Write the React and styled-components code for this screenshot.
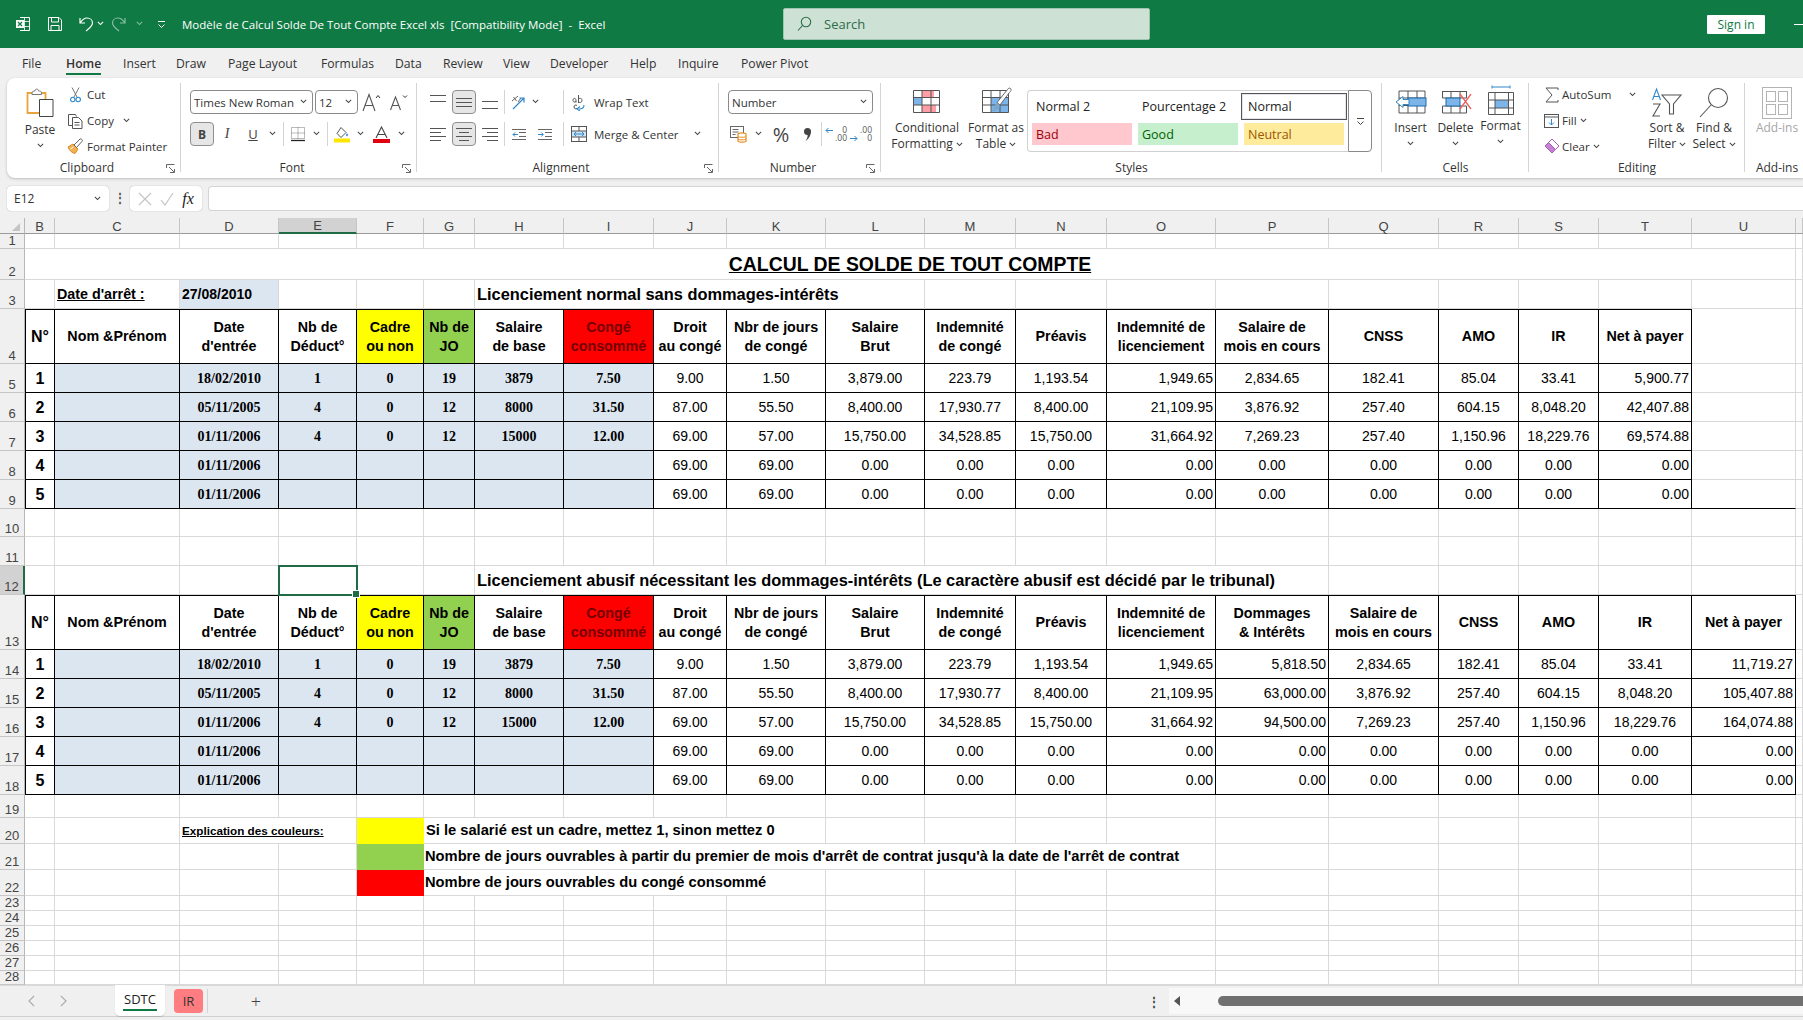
import React from 'react';
import styled, { createGlobalStyle } from 'styled-components';

const GlobalStyle = createGlobalStyle`
  html, body { margin: 0; padding: 0; background: #f0f0f0; }
  body { font-family: "Open Sans", "Liberation Sans", sans-serif; font-size: 12px; color: #222; }
  * { box-sizing: border-box; }
  svg { display: block; flex: none; }
`;

const Page = styled.div`
  width: 1803px;
  height: 1020px;
  overflow: hidden;
  display: flex;
  flex-direction: column;
  background: #f0f0f0;
`;

/* ---------- small drawings ---------- */

const Chevron = ({ color = '#444', size = 7 }) => (
  <svg width={size} height={size * 0.72} viewBox="0 0 8 5.5">
    <path d="M1 1l3 3 3-3" fill="none" stroke={color} strokeWidth="1.2" />
  </svg>
);

const Lines = ({ rows, color = '#555', w = 16, h = 14 }) => (
  <svg width={w} height={h} viewBox={`0 0 ${w} ${h}`}>
    {rows.map(([a, b, y], i) => (
      <path key={i} d={`M${a} ${y + 0.5}H${b}`} stroke={color} strokeWidth="1" />
    ))}
  </svg>
);

const ExcelLogo = () => (
  <svg width="16" height="16" viewBox="0 0 16 16">
    <path d="M5 1.5h9.5v13H5" fill="none" stroke="#fff" />
    <path d="M9.5 1.5v13M5 5.5h9.5M5 10.5h9.5" stroke="#fff" strokeWidth="0.8" />
    <rect x="1" y="4" width="8" height="8" fill="#fff" />
    <path d="M3 6l4 4M7 6l-4 4" stroke="#107c41" strokeWidth="1.3" />
  </svg>
);

const SaveIcon = () => (
  <svg width="16" height="16" viewBox="0 0 16 16" fill="none" stroke="#fff">
    <path d="M1.5 1.5h10.5l2.5 2.5v10.5h-13z" />
    <path d="M4.5 1.5v4.5h7v-4.5M4 14.5v-5h8v5" />
  </svg>
);

const UndoIcon = () => (
  <svg width="17" height="16" viewBox="0 0 17 16" fill="none" stroke="#fff" strokeWidth="1.2">
    <path d="M2 2v5h5M2 7c2-3 4-5 7-5 3.5 0 5.5 2.5 5.5 5 0 3-3 5-6.5 8" />
  </svg>
);

const RedoIcon = () => (
  <svg width="17" height="16" viewBox="0 0 17 16" fill="none" stroke="#fff" strokeWidth="1.2">
    <path d="M15 2v5h-5M15 7c-2-3-4-5-7-5C4.5 2 2.5 4.5 2.5 7c0 3 3 5 6.5 8" />
  </svg>
);

const CustomizeIcon = ({ color = '#fff' }) => (
  <svg width="9" height="9" viewBox="0 0 9 9" fill="none" stroke={color}>
    <path d="M1 1.5h7" />
    <path d="M1.5 4.5L4.5 7.5L7.5 4.5" />
  </svg>
);

const SearchIcon = () => (
  <svg width="15" height="16" viewBox="0 0 15 16" fill="none" stroke="#2d6b4a" strokeWidth="1.1">
    <circle cx="9" cy="6" r="4.7" />
    <path d="M5.5 9.5L1 14.5" />
  </svg>
);

const PasteIcon = () => (
  <svg width="28" height="31" viewBox="0 0 28 31">
    <path d="M1.5 6h18v20h-18z" fill="#fff" stroke="#e8a33d" strokeWidth="1.8" />
    <path d="M6 6c0-2 2-2 3-2 0-2.5 3.5-2.5 3.5 0 1 0 3 0 3 2v1.5H6z" fill="#fff" stroke="#777" />
    <path d="M13.5 12.5h13.5v17H13.5z" fill="#fff" stroke="#444" />
  </svg>
);

const CutIcon = () => (
  <svg width="11" height="16" viewBox="0 0 11 16" fill="none">
    <path d="M2 .5L7 10M9 .5L4 10" stroke="#777" />
    <circle cx="2.8" cy="12.5" r="2.2" stroke="#2f88cc" strokeWidth="1.1" />
    <circle cx="8.2" cy="12.5" r="2.2" stroke="#2f88cc" strokeWidth="1.1" />
  </svg>
);

const CopyIcon = () => (
  <svg width="17" height="16" viewBox="0 0 17 16" fill="none" stroke="#555">
    <path d="M5.5 12.5h-4v-11h7l1 2" />
    <path d="M5.5 4.5h6l3.5 3.5v7.5H5.5z" fill="#fff" />
    <path d="M7.5 9.5h5M7.5 12h5" />
  </svg>
);

const PainterIcon = () => (
  <svg width="17" height="16" viewBox="0 0 17 16">
    <path d="M1 9l5-3 5 5-3 4.5C5 15 2.5 12.5 1 9z" fill="#f2b14e" stroke="#d98a22" />
    <path d="M7 7l6-6c1-.8 3 1 2.2 2.2L9.5 9.5z" fill="#fff" stroke="#666" />
    <path d="M3.5 11l3-2" stroke="#fff" />
  </svg>
);

const Launcher = () => (
  <svg width="9" height="9" viewBox="0 0 9 9" fill="none" stroke="#666">
    <path d="M.5 4V.5H8.5M8.5 8.5H4M3 3l5 5M8.5 5v3.5" />
  </svg>
);

const GrowFont = ({ down }) => (
  <svg width="20" height="19" viewBox="0 0 20 19" fill="none" stroke="#555">
    <path d={down ? 'M1.5 17L6.5 4l5 13M3.5 12.5h6' : 'M1 18L7 1.5 13 18M3.5 12.5h7'} strokeWidth="1.1" />
    <path d={down ? 'M14 2.5l2 2 2-2' : 'M14 5l2-2.5L18 5'} stroke="#333" />
  </svg>
);

const BorderIcon = () => (
  <svg width="16" height="16" viewBox="0 0 16 16" fill="none" stroke="#777" strokeDasharray="1 1">
    <rect x="1.5" y="1.5" width="13" height="11" />
    <path d="M8 1.5v11M1.5 7h13" />
    <path d="M1 14.5h14" stroke="#222" strokeDasharray="none" strokeWidth="1.3" />
  </svg>
);

const FillIcon = () => (
  <svg width="16" height="17" viewBox="0 0 16 17">
    <path d="M7 1.5l5 5-5 5-4-4z" fill="none" stroke="#555" />
    <path d="M13 7c1 1.5 1.5 2.5 0 3.5-1.5-1-1-2 0-3.5z" fill="#3b86d8" />
    <rect y="12.5" width="16" height="4" fill="#ffe600" />
  </svg>
);

const FontColorIcon = () => (
  <svg width="17" height="17" viewBox="0 0 17 17">
    <path d="M3 12L8.5 1l5.5 11M5 8.5h7" fill="none" stroke="#444" strokeWidth="1.1" />
    <rect y="13" width="17" height="4" fill="#e0000f" />
  </svg>
);

const OrientIcon = () => (
  <svg width="17" height="17" viewBox="0 0 17 17" fill="none">
    <path d="M2 7l6-5M3.5 3l3 4M8 8L11 4" stroke="#666" />
    <path d="M3 15L14 4M9.5 4H14v4.5" stroke="#2f88cc" strokeWidth="1.2" />
  </svg>
);

const IndentIcon = ({ inc }) => (
  <svg width="14" height="13" viewBox="0 0 14 13" fill="none">
    <path d="M0 1.5h14M7 4.5h7M7 8.5h7M0 11.5h14" stroke="#666" />
    <path d={inc ? 'M0 6.5h5M3.3 4.5l2 2-2 2' : 'M1 6.5h5M3 4.5l-2 2 2 2'} stroke="#2f88cc" />
  </svg>
);

const WrapIcon = () => (
  <svg width="14" height="17" viewBox="0 0 14 17" fill="none">
    <path d="M1 6.5c0-3 3-3 3 0v2M1 6.5c0 2 3 2 3 .5M6.5 1v8M6.5 5c2-1.5 3.5-.5 3.5 1.5S8 9 6.5 8" stroke="#555" />
    <path d="M12 11c0 3-2 4-5 4M8 12.5L5 15l3 2" stroke="#2f88cc" strokeWidth="1.1" />
    <path d="M5 11.5c-1.5-1-3-.5-3 1.5s2 2 3 1.5" stroke="#555" />
  </svg>
);

const MergeIcon = () => (
  <svg width="16" height="16" viewBox="0 0 16 16" fill="none">
    <rect x=".5" y=".5" width="15" height="15" stroke="#555" />
    <rect x="1" y="5" width="14" height="6" fill="#cfe4f7" />
    <path d="M.5 5h15M.5 11h15M8 .5V5M8 11v4.5" stroke="#555" />
    <path d="M3 8h10M5 6l-2 2 2 2M11 6l2 2-2 2" stroke="#2f88cc" />
  </svg>
);

const AccountingIcon = () => (
  <svg width="18" height="18" viewBox="0 0 18 18" fill="none">
    <rect x=".5" y="1.5" width="13" height="11" stroke="#666" />
    <path d="M2.5 4.5h6M2.5 7h6M2.5 9.5h3" stroke="#666" />
    <path d="M8 9c0-1.5 8-1.5 8 0v7c0 1.5-8 1.5-8 0z" fill="#fff" stroke="#e58a1f" strokeWidth="1.2" />
    <path d="M8 11.5c0 1 8 1 8 0M8 14c0 1 8 1 8 0" stroke="#e58a1f" />
  </svg>
);

const CommaIcon = () => (
  <svg width="9" height="15" viewBox="0 0 9 15">
    <circle cx="4.5" cy="4.5" r="3.5" fill="#444" />
    <path d="M7.5 5c.5 4-2 7-5 9 1.5-2.5 2.5-4 2-7z" fill="#444" />
  </svg>
);

const DecimalText = styled.span`
  font-size: 8.5px;
  line-height: 8px;
  color: #555;
  white-space: nowrap;
`;

const DecimalBox = styled.div`
  width: 22px;
  display: grid;
  grid-template-columns: 8px 14px;
  grid-template-rows: 8px 8px;
  align-items: center;
  justify-items: end;
`;

const DecimalIcon = ({ inc }) => (
  <DecimalBox>
    {inc ? (
      <svg width="8" height="7" viewBox="0 0 8 7" fill="none">
        <path d="M8 3.5H1M3.5 1L1 3.500l2.500 2.500" stroke="#2f88cc" />
      </svg>
    ) : <span />}
    <DecimalText>{inc ? '0' : '.00'}</DecimalText>
    {inc ? <span /> : (
      <svg width="8" height="7" viewBox="0 0 8 7" fill="none">
        <path d="M0 3.500h7M4.500 1L7 3.500 4.500 6" stroke="#2f88cc" />
      </svg>
    )}
    <DecimalText>{inc ? '.00' : '0'}</DecimalText>
  </DecimalBox>
);

const GridSketch = ({ children }) => (
  <svg width="32" height="32" viewBox="0 0 32 32" fill="none">
    {children}
  </svg>
);

const tableLines = (
  <path d="M2.5 3.5h26v22h-26zM2.5 10.5h26M2.5 18h26M11 3.5v22M20 3.5v22" stroke="#555" />
);

const ConditionalIcon = () => (
  <GridSketch>
    <rect x="11" y="4" width="12" height="7" fill="#ff9ea5" />
    <rect x="3" y="11" width="8" height="7" fill="#7db5ea" />
    <rect x="11" y="18" width="14" height="7" fill="#ff9ea5" />
    {tableLines}
  </GridSketch>
);

const FormatTableIcon = () => (
  <GridSketch>
    <rect x="11" y="11" width="18" height="14" fill="#7db5ea" />
    {tableLines}
    <path d="M30.5 1.5c1.5 1.5 0 3-1.5 4.5l-9 12-3-2.5 10.5-13c1-1.5 2-1.8 3-1z" fill="#fff" stroke="#666" />
    <path d="M16.5 17c2-1 4 1 3 3-1 3-5 4.5-8.5 4 2-.8 3-2 3-4 0-1.500 1-2.500 2.500-3z" fill="#7aa7cc" />
  </GridSketch>
);

const InsertCellsIcon = () => (
  <GridSketch>
    <path d="M4 4h26v22H4zM4 11h26M4 18.5h26M13 4v22M22 4v22" stroke="#555" />
    <rect x="13" y="11" width="18" height="8" fill="#7db5ea" stroke="#1f6aa8" />
    <path d="M1 15l7-5.5v3h6v5H8v3z" fill="#fff" stroke="#2f88cc" />
  </GridSketch>
);

const DeleteCellsIcon = () => (
  <GridSketch>
    <path d="M2.5 4.5h24M2.5 26h24M2.5 11h24M2.5 19h24M11 4.5V11M20 4.5V11M11 19v7M20 19v7M2.5 4v7M2.5 19v7M26.5 4v7M26.5 19v7" stroke="#555" />
    <rect x="6" y="11" width="14" height="8" fill="#7db5ea" stroke="#1f6aa8" />
    <path d="M20 7l11 15M31 7L20 22" stroke="#f0625f" strokeWidth="1.3" />
  </GridSketch>
);

const FormatCellsIcon = () => (
  <svg width="30" height="33" viewBox="0 0 30 33" fill="none">
    <path d="M6 2h18M6 .5v3M24 .5v3" stroke="#2f88cc" />
    <rect x="9" y="15" width="14" height="8" fill="#7db5ea" />
    <path d="M2.5 7.5h25v22h-25zM2.5 15h25M2.5 23h25M9 7.5v22M22.5 7.5v22" stroke="#555" />
  </svg>
);

const SigmaIcon = () => (
  <svg width="14" height="16" viewBox="0 0 14 16" fill="none" stroke="#555">
    <path d="M13 3V1H1l6 7-6 7h12v-2" />
  </svg>
);

const FillDownIcon = () => (
  <svg width="15" height="14" viewBox="0 0 15 14" fill="none">
    <rect x=".5" y=".5" width="14" height="13" stroke="#555" />
    <path d="M.5 3h14" stroke="#555" />
    <path d="M7.5 5v6M5 8.5l2.5 2.5L10 8.5" stroke="#2f88cc" />
  </svg>
);

const EraserIcon = () => (
  <svg width="16" height="16" viewBox="0 0 16 16">
    <path d="M1 8l7-7 7 7-7 7z" fill="#fff" stroke="#a65fb7" />
    <path d="M1 8l3.5-3.5 7 7L8 15z" fill="#c77fd6" stroke="#a65fb7" />
  </svg>
);

const SortFilterIcon = () => (
  <svg width="32" height="32" viewBox="0 0 32 32" fill="none">
    <path d="M1.5 13L5.5 2l4 11M3 9.5h5" stroke="#2f88cc" strokeWidth="1.1" />
    <path d="M2 17h7l-7 12h7" stroke="#555" strokeWidth="1.1" />
    <path d="M11 8h19l-7.5 9v10h-4V17z" stroke="#555" strokeWidth="1.1" />
  </svg>
);

const FindIcon = () => (
  <svg width="32" height="32" viewBox="0 0 32 32" fill="none" stroke="#555" strokeWidth="1.1">
    <circle cx="20" cy="11" r="9.5" />
    <path d="M13 18L2 30" />
  </svg>
);

const AddInsIcon = () => (
  <svg width="30" height="32" viewBox="0 0 30 32" fill="none" stroke="#b4b4b4">
    <rect x=".5" y=".5" width="29" height="31" />
    <rect x="4.5" y="4.5" width="9" height="10" />
    <rect x="16.5" y="4.5" width="9" height="10" />
    <rect x="4.5" y="17.5" width="9" height="10" />
    <rect x="16.5" y="17.5" width="9" height="10" />
  </svg>
);

const NavChevron = ({ right }) => (
  <svg width="7" height="12" viewBox="0 0 7 12" fill="none" stroke="#aaa" strokeWidth="1.1">
    <path d={right ? 'M1 1l5 5-5 5' : 'M6 1L1 6l5 5'} />
  </svg>
);

/* ---------- title bar ---------- */

const TitleBar = styled.header`
  height: 48px;
  flex: none;
  background: #107a44;
  color: #fff;
  display: flex;
  align-items: center;
  padding-left: 15px;
`;

const Slot = styled.div`
  width: ${(p) => p.$w}px;
  flex: none;
  display: flex;
  align-items: center;
  justify-content: center;
  opacity: ${(p) => p.$dim || 1};
`;

const DocTitle = styled.div`
  width: 609px;
  flex: none;
  padding-left: 8px;
  white-space: pre;
  font-size: 11.5px;
`;

const SearchBox = styled.div`
  width: 367px;
  height: 32px;
  flex: none;
  display: flex;
  align-items: center;
  gap: 12px;
  padding-left: 13px;
  background: #cde1d5;
  border: 1px solid #9fc4ae;
  border-radius: 2px;
  color: #2d6b4a;
  font-size: 13px;
`;

const SignIn = styled.div`
  width: 58px;
  height: 19px;
  flex: none;
  margin-left: 557px;
  background: #fff;
  color: #107a44;
  font-size: 12px;
  line-height: 19px;
  text-align: center;
  border-radius: 1px;
`;

const MinimizeMark = styled.div`
  width: 9px;
  height: 1px;
  margin-left: 29px;
  background: #fff;
`;

/* ---------- tabs ---------- */

const TabBar = styled.nav`
  height: 30px;
  flex: none;
  display: flex;
  align-items: center;
  padding-left: 22px;
  background: #f0f0f0;
  font-size: 12.2px;
`;

const TabItem = styled.div`
  width: ${(p) => p.$w}px;
  flex: none;
  color: #333;
`;

const TabText = styled.span`
  display: inline-block;
  position: relative;
  font-weight: ${(p) => (p.$active ? 600 : 400)};

  &::after {
    content: '';
    display: ${(p) => (p.$active ? 'block' : 'none')};
    position: absolute;
    left: 0;
    right: 0;
    bottom: -3px;
    height: 2px;
    background: #107a44;
  }
`;

/* ---------- ribbon ---------- */

const Ribbon = styled.section`
  height: 100px;
  flex: none;
  margin-left: 7px;
  display: flex;
  background: #fff;
  border-radius: 8px 0 0 8px;
  box-shadow: 0 1px 3px rgba(0, 0, 0, 0.22);
  position: relative;
`;

const Group = styled.div`
  width: ${(p) => p.$w}px;
  flex: none;
  display: flex;
  flex-direction: column;
  position: relative;

  &::after {
    content: '';
    display: ${(p) => (p.$last ? 'none' : 'block')};
    position: absolute;
    right: 0;
    top: 5px;
    bottom: 6px;
    width: 1px;
    background: #d4d4d4;
  }
`;

const GroupBody = styled.div`
  height: 81px;
  flex: none;
  display: flex;
  padding-left: ${(p) => p.$pl || 0}px;
  padding-top: ${(p) => p.$pt || 0}px;
`;

const Stack = styled.div`
  display: flex;
  flex-direction: column;
  flex: none;
  width: ${(p) => (p.$w ? `${p.$w}px` : 'auto')};
  gap: ${(p) => p.$gap || 0}px;
  padding-top: ${(p) => p.$pt || 0}px;
`;

const Row = styled.div`
  display: flex;
  align-items: center;
  height: 24px;
  white-space: nowrap;
  font-size: 11.5px;
  color: #333;
`;

const GroupLabel = styled.div`
  position: relative;
  height: 19px;
  line-height: 17px;
  text-align: center;
  color: #333;
  font-size: 12px;
  padding-right: ${(p) => (p.$launcher ? 14 : 0)}px;
`;

const LauncherSpot = styled.span`
  position: absolute;
  right: 6px;
  top: 5px;
`;

const BigButton = styled.div`
  width: ${(p) => p.$w}px;
  flex: none;
  display: flex;
  flex-direction: column;
  align-items: center;
  padding-top: ${(p) => p.$pt ?? 9}px;
  line-height: 16px;
  white-space: nowrap;
  color: ${(p) => p.$color || '#333'};
`;

const IconBox = styled.div`
  height: ${(p) => p.$h || 33}px;
  display: flex;
  align-items: flex-start;
  justify-content: center;
`;

const InlineChevron = styled.span`
  display: inline-flex;
  vertical-align: middle;
  margin-left: 3px;
`;

const ChevronLine = styled.div`
  height: 16px;
  display: flex;
  align-items: center;
  justify-content: center;
`;

const ToolRow = styled.div`
  height: 26px;
  display: flex;
  align-items: center;
  white-space: nowrap;
  font-size: 11.5px;
  color: #333;
`;

const ToolIcon = styled.div`
  width: ${(p) => p.$w || 18}px;
  flex: none;
  display: flex;
  justify-content: center;
`;

const DropBox = styled.div`
  width: ${(p) => p.$w}px;
  height: 24px;
  flex: none;
  margin-right: ${(p) => p.$mr || 0}px;
  display: flex;
  align-items: center;
  justify-content: space-between;
  padding: 0 5px 0 3px;
  border: 1px solid #8a8a8a;
  border-radius: 4px;
  font-size: 11.5px;
  color: #333;
`;

const ToggleButton = styled.div`
  width: 24px;
  height: 24px;
  flex: none;
  margin-left: ${(p) => p.$ml || 0}px;
  display: flex;
  align-items: center;
  justify-content: center;
  background: #e6e6e6;
  border: 1px solid #8f8f8f;
  border-radius: 4px;
  font-weight: 700;
  font-size: 12px;
  color: #444;
`;

const Divider = styled.div`
  width: 1px;
  height: 24px;
  flex: none;
  background: #d4d4d4;
`;

const LetterIcon = styled.span`
  font-family: ${(p) => (p.$serif ? '"Liberation Serif", serif' : '"Open Sans", sans-serif')};
  font-style: ${(p) => (p.$italic ? 'italic' : 'normal')};
  text-decoration: ${(p) => (p.$under ? 'underline' : 'none')};
  font-size: ${(p) => p.$size || 13}px;
  color: #444;
`;

const Gallery = styled.div`
  width: 321px;
  height: 62px;
  flex: none;
  margin-left: 6px;
  margin-top: 3px;
  padding: 2px 4px;
  display: grid;
  grid-template-columns: repeat(3, 100px);
  grid-template-rows: 27px 22px;
  column-gap: 6px;
  row-gap: 3px;
  border: 1px solid #d0d0d0;
  border-right: none;
  border-radius: 4px 0 0 4px;
`;

const StyleCell = styled.div`
  display: flex;
  align-items: center;
  padding-left: 4px;
  font-size: 12.5px;
  color: ${(p) => p.$fg || '#222'};
  background: ${(p) => p.$bg || 'transparent'};
`;

const BoxedStyle = styled(StyleCell)`
  margin: 0 -3px;
  padding-left: 6px;
  background: #fff;
  border: 1px solid #555;
  box-shadow: inset 0 0 0 1px #e4e4ef;
`;

const GalleryMore = styled.div`
  width: 24px;
  height: 62px;
  flex: none;
  margin-top: 3px;
  display: flex;
  align-items: center;
  justify-content: center;
  border: 1px solid #8a8a8a;
  border-radius: 0 4px 4px 0;
`;

/* ---------- formula bar ---------- */

const FormulaBar = styled.div`
  height: 25px;
  flex: none;
  margin: 8px 0 7px;
  display: flex;
  align-items: stretch;
  padding-left: 7px;
`;

const NameBox = styled.div`
  width: 102px;
  flex: none;
  display: flex;
  align-items: center;
  justify-content: space-between;
  padding: 0 8px 0 7px;
  background: #fff;
  border-radius: 4px;
  box-shadow: 0 0 1px rgba(0, 0, 0, 0.4);
  color: #333;
`;

const BarDots = styled.div`
  width: 21px;
  flex: none;
  text-align: center;
  font-weight: 700;
  line-height: 23px;
  color: #555;
`;

const FxBox = styled.div`
  width: 72px;
  flex: none;
  display: flex;
  align-items: center;
  justify-content: space-around;
  padding: 0 4px;
  background: #fff;
  border-radius: 4px;
  box-shadow: 0 0 1px rgba(0, 0, 0, 0.4);
  font-family: "Liberation Serif", serif;
  font-style: italic;
  font-size: 16px;
`;

const FormulaInput = styled.div`
  flex: 1;
  margin-left: 6px;
  background: #fff;
  border-top: 1px solid #d4d4d4;
  border-bottom: 1px solid #d4d4d4;
  border-left: 1px solid #d4d4d4;
  border-radius: 4px 0 0 4px;
`;

/* ---------- sheet ---------- */

const COLS = ['B', 'C', 'D', 'E', 'F', 'G', 'H', 'I', 'J', 'K', 'L', 'M', 'N', 'O', 'P', 'Q', 'R', 'S', 'T', 'U', 'V'];
const COL_WIDTHS = [25, 30, 125, 99, 78, 67, 51, 89, 90, 73, 99, 99, 91, 91, 109, 113, 110, 80, 80, 93, 104, 7];
const ROW_HEIGHTS = [15, 31, 29, 55, 29, 29, 29, 29, 29, 28, 29, 29, 55, 29, 29, 29, 29, 29, 23, 26, 26, 26, 15, 15, 15, 15, 15, 14];

const Sheet = styled.div`
  height: 767px;
  flex: none;
  display: grid;
  grid-template-columns: ${COL_WIDTHS.map((w) => `${w}px`).join(' ')};
  grid-template-rows: 16px ${ROW_HEIGHTS.map((h) => `${h}px`).join(' ')};
  background: #fff;
  overflow: hidden;
`;

const HeadBase = styled.div`
  font-family: "Liberation Sans", sans-serif;
  font-size: 13px;
  color: #444;
  background: ${(p) => (p.$active ? '#d2d2d2' : '#f0f0f0')};
`;

const Corner = styled(HeadBase)`
  position: relative;
  border-right: 1px solid #b8b8b8;
  border-bottom: 1px solid #9a9a9a;

  &::after {
    content: '';
    position: absolute;
    right: 4px;
    bottom: 2px;
    border-style: solid;
    border-width: 0 0 8px 8px;
    border-color: transparent transparent #c4c4c4 transparent;
  }
`;

const ColHead = styled(HeadBase)`
  display: flex;
  align-items: center;
  justify-content: center;
  padding-top: 1px;
  border-right: 1px solid #c6c6c6;
  border-bottom: ${(p) => (p.$active ? '2px solid #1f6b45' : '1px solid #9a9a9a')};
`;

const RowHead = styled(HeadBase)`
  display: flex;
  align-items: flex-end;
  justify-content: center;
  line-height: 14px;
  border-right: ${(p) => (p.$active ? '2px solid #1f6b45' : '1px solid #b8b8b8')};
  border-bottom: 1px solid #c6c6c6;
`;

const FONTS = {
  arial: '"Liberation Sans", Arial, sans-serif',
  times: '"Liberation Serif", "Times New Roman", serif',
};

const JUSTIFY = { left: 'flex-start', center: 'center', right: 'flex-end' };

const Cell = styled.div`
  grid-column: span ${(p) => p.$span || 1};
  display: flex;
  align-items: center;
  justify-content: ${(p) => JUSTIFY[p.$align || 'center']};
  min-width: 0;
  padding: 0 ${(p) => p.$pad ?? 2}px;
  white-space: pre-line;
  text-align: center;
  line-height: 19px;
  font-family: ${(p) => FONTS[p.$font || 'arial']};
  font-size: ${(p) => p.$size || 14}px;
  font-weight: ${(p) => (p.$bold ? 700 : 400)};
  text-decoration: ${(p) => (p.$underline ? 'underline' : 'none')};
  color: ${(p) => p.$fg || '#000'};
  background: ${(p) => p.$bg || '#fff'};
  border-right: 1px solid ${(p) => (p.$box ? '#000' : '#d9d9d9')};
  border-bottom: 1px solid ${(p) => (p.$box || p.$under ? '#000' : '#d9d9d9')};
  border-top: ${(p) => (p.$top ? '1px solid #000' : 'none')};
  border-left: ${(p) => (p.$first ? '1px solid #000' : 'none')};
  border-color: ${(p) => p.$edge};
`;

const SelectedCell = styled(Cell)`
  position: relative;
  z-index: 2;
  outline: 2px solid #1f6b45;
  outline-offset: -1px;

  &::after {
    content: '';
    position: absolute;
    right: -4px;
    bottom: -4px;
    width: 6px;
    height: 6px;
    background: #1f6b45;
    border: 1px solid #fff;
  }
`;

const BLUE = '#dce6f1';
const TONES = {
  'Cadre\nou non': { $bg: '#ffff00' },
  'Nb de\nJO': { $bg: '#92d050' },
  'Congé\nconsommé': { $bg: '#ff0000', $fg: '#750000' },
};

const BASE_HEAD = [
  'N°', 'Nom &Prénom', "Date\nd'entrée", 'Nb de\nDéduct°', 'Cadre\nou non', 'Nb de\nJO', 'Salaire\nde base',
  'Congé\nconsommé', 'Droit\nau congé', 'Nbr de jours\nde congé', 'Salaire\nBrut', 'Indemnité\nde congé', 'Préavis',
  'Indemnité de\nlicenciement',
];
const HEAD_ONE = [...BASE_HEAD, 'Salaire de\nmois en cours', 'CNSS', 'AMO', 'IR', 'Net à payer'];
const HEAD_TWO = [...BASE_HEAD, 'Dommages\n& Intérêts', 'Salaire de\nmois en cours', 'CNSS', 'AMO', 'IR', 'Net à payer'];

const INPUTS = [
  ['18/02/2010', '1', '0', '19', '3879', '7.50'],
  ['05/11/2005', '4', '0', '12', '8000', '31.50'],
  ['01/11/2006', '4', '0', '12', '15000', '12.00'],
  ['01/11/2006', '', '', '', '', ''],
  ['01/11/2006', '', '', '', '', ''],
];

const CALC = [
  ['9.00', '1.50', '3,879.00', '223.79', '1,193.54', '1,949.65'],
  ['87.00', '55.50', '8,400.00', '17,930.77', '8,400.00', '21,109.95'],
  ['69.00', '57.00', '15,750.00', '34,528.85', '15,750.00', '31,664.92'],
  ['69.00', '69.00', '0.00', '0.00', '0.00', '0.00'],
  ['69.00', '69.00', '0.00', '0.00', '0.00', '0.00'],
];

const TAIL_ONE = [
  ['2,834.65', '182.41', '85.04', '33.41', '5,900.77'],
  ['3,876.92', '257.40', '604.15', '8,048.20', '42,407.88'],
  ['7,269.23', '257.40', '1,150.96', '18,229.76', '69,574.88'],
  ['0.00', '0.00', '0.00', '0.00', '0.00'],
  ['0.00', '0.00', '0.00', '0.00', '0.00'],
];

const DAMAGES = ['5,818.50', '63,000.00', '94,500.00', '0.00', '0.00'];

const TAIL_TWO = [
  ['2,834.65', '182.41', '85.04', '33.41', '11,719.27'],
  ['3,876.92', '257.40', '604.15', '8,048.20', '105,407.88'],
  ['7,269.23', '257.40', '1,150.96', '18,229.76', '164,074.88'],
  ['0.00', '0.00', '0.00', '0.00', '0.00'],
  ['0.00', '0.00', '0.00', '0.00', '0.00'],
];

// a row is a map of column letter -> cell props, everything else is an empty gridline cell
const renderRow = (n, spec = {}, active) => {
  const out = [<RowHead key={`h${n}`} $active={active}>{n}</RowHead>];
  for (let i = 0; i < COLS.length; i++) {
    const col = COLS[i];
    const { text, span = 1, selected, ...rest } = spec[col] || {};
    const Comp = selected ? SelectedCell : Cell;
    out.push(<Comp key={`${col}${n}`} $span={span} {...rest}>{text}</Comp>);
    i += span - 1;
  }
  return out;
};

const headerSpec = (labels) => {
  const spec = {};
  labels.forEach((text, i) => {
    spec[COLS[i]] = {
      text,
      $box: true,
      $top: true,
      $first: i === 0,
      $bold: true,
      $size: i === 0 ? 16 : 14.3,
      ...TONES[text],
    };
  });
  return spec;
};

const dataSpec = (index, rightCols, tail, under) => {
  const spec = {
    B: { text: String(index + 1), $box: true, $first: true, $bold: true, $size: 16 },
    C: { $box: true, $bg: BLUE },
  };
  INPUTS[index].forEach((text, i) => {
    spec[COLS[i + 2]] = { text, $box: true, $bg: BLUE, $font: 'times', $bold: true };
  });
  [...CALC[index], ...tail].forEach((text, i) => {
    const col = COLS[i + 8];
    spec[col] = { text, $box: true, $align: rightCols.includes(col) ? 'right' : 'center' };
  });
  if (under) spec.U = { $under: true };
  return spec;
};

const rowsOne = INPUTS.map((_, i) => dataSpec(i, ['O', 'T'], TAIL_ONE[i], i === 4));
const rowsTwo = INPUTS.map((_, i) =>
  dataSpec(i, ['O', 'P', 'U'], [DAMAGES[i], ...TAIL_TWO[i]], false)
);

const Grid = () => (
  <Sheet>
    <Corner />
    {COLS.map((c) => (
      <ColHead key={c} $active={c === 'E'}>{c === 'V' ? '' : c}</ColHead>
    ))}
    {renderRow(1)}
    {renderRow(2, {
      B: { text: 'CALCUL DE SOLDE DE TOUT COMPTE', span: 20, $bold: true, $size: 19.4, $underline: true },
    })}
    {renderRow(3, {
      C: { text: "Date d'arrêt :", $align: 'left', $bold: true, $underline: true, $size: 14.3 },
      D: { text: '27/08/2010', $align: 'left', $bold: true, $bg: BLUE },
      H: { text: 'Licenciement normal sans dommages-intérêts', span: 5, $align: 'left', $bold: true, $size: 16.4 },
    })}
    {renderRow(4, headerSpec(HEAD_ONE))}
    {rowsOne.map((spec, i) => renderRow(5 + i, spec))}
    {renderRow(10)}
    {renderRow(11)}
    {renderRow(
      12,
      {
        E: { selected: true },
        H: {
          text: 'Licenciement abusif nécessitant les dommages-intérêts (Le caractère abusif est décidé par le tribunal)',
          span: 9,
          $align: 'left',
          $bold: true,
          $size: 16.4,
        },
      },
      true
    )}
    {renderRow(13, headerSpec(HEAD_TWO))}
    {rowsTwo.map((spec, i) => renderRow(14 + i, spec))}
    {renderRow(19)}
    {renderRow(20, {
      D: { text: 'Explication des couleurs:', span: 2, $align: 'left', $bold: true, $underline: true, $size: 11.7 },
      F: { $bg: '#ffff00', $edge: '#ffff00' },
      G: { text: 'Si le salarié est un cadre, mettez 1, sinon mettez 0', span: 5, $align: 'left', $bold: true, $size: 14.7 },
    })}
    {renderRow(21, {
      F: { $bg: '#92d050', $edge: '#92d050' },
      G: {
        text: "Nombre de jours ouvrables à partir du premier de mois d'arrêt de contrat jusqu'à la date de l'arrêt de contrat",
        span: 9,
        $align: 'left',
        $bold: true,
        $pad: 1,
        $size: 14.7,
      },
    })}
    {renderRow(22, {
      F: { $bg: '#ff0000', $edge: '#ff0000' },
      G: { text: 'Nombre de jours ouvrables du congé consommé', span: 5, $align: 'left', $bold: true, $pad: 1, $size: 14.7 },
    })}
    {[23, 24, 25, 26, 27, 28].map((n) => renderRow(n))}
  </Sheet>
);

/* ---------- bottom bar ---------- */

const SheetBar = styled.footer`
  height: 32px;
  flex: none;
  display: flex;
  align-items: center;
  background: #f0f0f0;
  border-top: 1px solid #d9d9d9;
  border-bottom: 1px solid #d0d0d0;
`;

const NavArrow = styled.span`
  width: ${(p) => p.$w}px;
  flex: none;
  display: flex;
  justify-content: center;
`;

const SheetTab = styled.div`
  width: 50px;
  height: 31px;
  flex: none;
  margin-top: -1px;
  margin-left: 17px;
  padding-top: 5px;
  text-align: center;
  font-size: 13px;
  background: #fff;
  color: #222;
  border-radius: 0 0 5px 5px;
  box-shadow: 0 1px 1px rgba(0, 0, 0, 0.15);
  position: relative;

  &::after {
    content: '';
    position: absolute;
    left: 8px;
    right: 8px;
    bottom: 5px;
    height: 2px;
    background: #107a44;
  }
`;

const ColorTab = styled.div`
  width: 29px;
  height: 24px;
  flex: none;
  margin-left: 9px;
  text-align: center;
  line-height: 24px;
  font-size: 13px;
  color: #333;
  background: #ff7c80;
  border-radius: 4px;
`;

const TabEdge = styled.div`
  width: 1px;
  height: 24px;
  flex: none;
  margin-left: 4px;
  background: #d4d4d4;
`;

const PlusMark = styled.div`
  width: 14px;
  flex: none;
  margin-left: 41px;
  text-align: center;
  font-size: 18px;
  font-weight: 300;
  line-height: 18px;
  color: #444;
`;

const BarDotsRight = styled.div`
  width: 10px;
  flex: none;
  margin-left: 885px;
  text-align: center;
  font-weight: 700;
  color: #444;
`;

const ScrollArea = styled.div`
  flex: 1;
  height: 26px;
  margin-left: 11px;
  display: flex;
  align-items: center;
  background: #f8f8f8;
`;

const ScrollLeft = styled.div`
  width: 0;
  height: 0;
  margin-left: 5px;
  border-style: solid;
  border-width: 5px 6px 5px 0;
  border-color: transparent #555 transparent transparent;
`;

const ScrollThumb = styled.div`
  flex: 1;
  height: 10px;
  margin-left: 38px;
  background: #707070;
  border-radius: 5px 0 0 5px;
`;

const StatusStrip = styled.div`
  height: 3px;
  flex: none;
  background: #f0f0f0;
`;

const TABS = [
  ['File', 44], ['Home', 57], ['Insert', 53], ['Draw', 52], ['Page Layout', 93], ['Formulas', 74], ['Data', 48],
  ['Review', 60], ['View', 47], ['Developer', 80], ['Help', 48], ['Inquire', 63], ['Power Pivot', 90],
];

const chev = <Chevron />;

const App = () => (
  <Page>
    <GlobalStyle />
    <TitleBar>
      <ExcelLogo />
      <Slot $w={47}><SaveIcon /></Slot>
      <Slot $w={16}><UndoIcon /></Slot>
      <Slot $w={12}><Chevron color="#fff" /></Slot>
      <Slot $w={24} $dim={0.5}><RedoIcon /></Slot>
      <Slot $w={18} $dim={0.5}><Chevron color="#fff" /></Slot>
      <Slot $w={26}><CustomizeIcon /></Slot>
      <DocTitle>{'Modèle de Calcul Solde De Tout Compte Excel xls  [Compatibility Mode]  -  Excel'}</DocTitle>
      <SearchBox><SearchIcon />Search</SearchBox>
      <SignIn>Sign in</SignIn>
      <MinimizeMark />
    </TitleBar>

    <TabBar>
      {TABS.map(([name, w]) => (
        <TabItem key={name} $w={w}>
          <TabText $active={name === 'Home'}>{name}</TabText>
        </TabItem>
      ))}
    </TabBar>

    <Ribbon>
      <Group $w={174}>
        <GroupBody $pl={10}>
          <BigButton $w={46} $pt={9}>
            <IconBox $h={35}><PasteIcon /></IconBox>
            Paste
            <ChevronLine>{chev}</ChevronLine>
          </BigButton>
          <Stack $pt={4}>
            <ToolRow>
              <ToolIcon $w={24}><CutIcon /></ToolIcon>Cut
            </ToolRow>
            <ToolRow>
              <ToolIcon $w={24}><CopyIcon /></ToolIcon>Copy
              <Slot $w={26}>{chev}</Slot>
            </ToolRow>
            <ToolRow>
              <ToolIcon $w={24}><PainterIcon /></ToolIcon>Format Painter
            </ToolRow>
          </Stack>
        </GroupBody>
        <GroupLabel $launcher>Clipboard<LauncherSpot><Launcher /></LauncherSpot></GroupLabel>
      </Group>

      <Group $w={236}>
        <GroupBody $pl={9} $pt={12}>
          <Stack $gap={8}>
            <Row>
              <DropBox $w={123} $mr={2}>Times New Roman{chev}</DropBox>
              <DropBox $w={43}>12{chev}</DropBox>
              <Slot $w={27}><GrowFont /></Slot>
              <Slot $w={27}><GrowFont down /></Slot>
            </Row>
            <Row>
              <ToggleButton>B</ToggleButton>
              <Slot $w={26}><LetterIcon $italic $serif $size={14}>I</LetterIcon></Slot>
              <Slot $w={26}><LetterIcon $under>U</LetterIcon></Slot>
              <Slot $w={12}>{chev}</Slot>
              <Slot $w={10}><Divider /></Slot>
              <Slot $w={20}><BorderIcon /></Slot>
              <Slot $w={16}>{chev}</Slot>
              <Slot $w={6}><Divider /></Slot>
              <Slot $w={24}><FillIcon /></Slot>
              <Slot $w={12}>{chev}</Slot>
              <Slot $w={30}><FontColorIcon /></Slot>
              <Slot $w={10}>{chev}</Slot>
            </Row>
          </Stack>
        </GroupBody>
        <GroupLabel $launcher>Font<LauncherSpot><Launcher /></LauncherSpot></GroupLabel>
      </Group>

      <Group $w={302}>
        <GroupBody $pl={9} $pt={12}>
          <Stack $gap={8}>
            <Row>
              <Slot $w={24}><Lines rows={[[0, 16, 0], [0, 16, 6]]} /></Slot>
              <ToggleButton $ml={2}><Lines rows={[[0, 16, 3], [0, 16, 7], [0, 16, 11]]} /></ToggleButton>
              <Slot $w={28}><Lines rows={[[0, 16, 6], [0, 16, 13]]} /></Slot>
              <Divider />
              <Slot $w={26}><OrientIcon /></Slot>
              <Slot $w={8}>{chev}</Slot>
              <Slot $w={24} />
              <Divider />
              <Slot $w={30}><WrapIcon /></Slot>
              Wrap Text
            </Row>
            <Row>
              <Slot $w={24}><Lines rows={[[0, 16, 1], [0, 11, 5], [0, 16, 9], [0, 11, 13]]} /></Slot>
              <ToggleButton $ml={2}><Lines rows={[[0, 16, 1], [3, 13, 5], [0, 16, 9], [3, 13, 13]]} /></ToggleButton>
              <Slot $w={28}><Lines rows={[[0, 16, 1], [5, 16, 5], [0, 16, 9], [5, 16, 13]]} /></Slot>
              <Divider />
              <Slot $w={28}><IndentIcon /></Slot>
              <Slot $w={24}><IndentIcon inc /></Slot>
              <Slot $w={6} />
              <Divider />
              <Slot $w={30}><MergeIcon /></Slot>
              Merge &amp; Center
              <Slot $w={38}>{chev}</Slot>
            </Row>
          </Stack>
        </GroupBody>
        <GroupLabel $launcher>Alignment<LauncherSpot><Launcher /></LauncherSpot></GroupLabel>
      </Group>

      <Group $w={162}>
        <GroupBody $pl={9} $pt={12}>
          <Stack $gap={8}>
            <DropBox $w={145}>Number{chev}</DropBox>
            <Row>
              <Slot $w={22}><AccountingIcon /></Slot>
              <Slot $w={16}>{chev}</Slot>
              <Slot $w={30}><LetterIcon $size={20}>%</LetterIcon></Slot>
              <Slot $w={22}><CommaIcon /></Slot>
              <Slot $w={3} />
              <Divider />
              <Slot $w={28}><DecimalIcon inc /></Slot>
              <Slot $w={22}><DecimalIcon /></Slot>
            </Row>
          </Stack>
        </GroupBody>
        <GroupLabel $launcher>Number<LauncherSpot><Launcher /></LauncherSpot></GroupLabel>
      </Group>

      <Group $w={501}>
        <GroupBody $pl={2} $pt={9}>
          <BigButton $w={88} $pt={0}>
            <IconBox><ConditionalIcon /></IconBox>
            Conditional
            <span>Formatting<InlineChevron>{chev}</InlineChevron></span>
          </BigButton>
          <BigButton $w={50} $pt={0}>
            <IconBox><FormatTableIcon /></IconBox>
            Format as
            <span>Table<InlineChevron>{chev}</InlineChevron></span>
          </BigButton>
          <Gallery>
            <StyleCell>Normal 2</StyleCell>
            <StyleCell>Pourcentage 2</StyleCell>
            <BoxedStyle>Normal</BoxedStyle>
            <StyleCell $bg="#ffc7ce" $fg="#9c0006">Bad</StyleCell>
            <StyleCell $bg="#c6efce" $fg="#006100">Good</StyleCell>
            <StyleCell $bg="#ffeb9c" $fg="#9c5700">Neutral</StyleCell>
          </Gallery>
          <GalleryMore><CustomizeIcon color="#444" /></GalleryMore>
        </GroupBody>
        <GroupLabel>Styles</GroupLabel>
      </Group>

      <Group $w={147}>
        <GroupBody $pl={6}>
          <BigButton $w={45}><IconBox><InsertCellsIcon /></IconBox>Insert<ChevronLine>{chev}</ChevronLine></BigButton>
          <BigButton $w={45}><IconBox><DeleteCellsIcon /></IconBox>Delete<ChevronLine>{chev}</ChevronLine></BigButton>
          <BigButton $w={45} $pt={7}><IconBox><FormatCellsIcon /></IconBox>Format<ChevronLine>{chev}</ChevronLine></BigButton>
        </GroupBody>
        <GroupLabel>Cells</GroupLabel>
      </Group>

      <Group $w={216}>
        <GroupBody $pl={12}>
          <Stack $pt={4} $w={102}>
            <ToolRow>
              <ToolIcon $w={21}><SigmaIcon /></ToolIcon>AutoSum
              <Slot $w={42}>{chev}</Slot>
            </ToolRow>
            <ToolRow>
              <ToolIcon $w={21}><FillDownIcon /></ToolIcon>Fill<InlineChevron>{chev}</InlineChevron>
            </ToolRow>
            <ToolRow>
              <ToolIcon $w={21}><EraserIcon /></ToolIcon>Clear<InlineChevron>{chev}</InlineChevron>
            </ToolRow>
          </Stack>
          <BigButton $w={48} $pt={9}>
            <IconBox><SortFilterIcon /></IconBox>
            Sort &amp;
            <span>Filter<InlineChevron>{chev}</InlineChevron></span>
          </BigButton>
          <BigButton $w={46} $pt={9}>
            <IconBox><FindIcon /></IconBox>
            Find &amp;
            <span>Select<InlineChevron>{chev}</InlineChevron></span>
          </BigButton>
        </GroupBody>
        <GroupLabel>Editing</GroupLabel>
      </Group>

      <Group $w={64} $last>
        <GroupBody>
          <BigButton $w={64} $color="#a6a6a6" $pt={9}>
            <IconBox><AddInsIcon /></IconBox>
            Add-ins
          </BigButton>
        </GroupBody>
        <GroupLabel>Add-ins</GroupLabel>
      </Group>
    </Ribbon>

    <FormulaBar>
      <NameBox>E12{chev}</NameBox>
      <BarDots>⋮</BarDots>
      <FxBox>
        <svg width="14" height="14" viewBox="0 0 14 14" stroke="#c4c4c4" strokeWidth="1.2"><path d="M1 1l12 12M13 1L1 13" /></svg>
        <svg width="14" height="14" viewBox="0 0 14 14" fill="none" stroke="#c4c4c4" strokeWidth="1.2"><path d="M1 8l4 5 8-12" /></svg>
        <span>fx</span>
      </FxBox>
      <FormulaInput />
    </FormulaBar>

    <Grid />

    <SheetBar>
      <NavArrow $w={23} />
      <NavArrow $w={16}><NavChevron /></NavArrow>
      <NavArrow $w={48}><NavChevron right /></NavArrow>
      <NavArrow $w={11} />
      <SheetTab>SDTC</SheetTab>
      <ColorTab>IR</ColorTab>
      <TabEdge />
      <PlusMark>+</PlusMark>
      <BarDotsRight>⋮</BarDotsRight>
      <ScrollArea>
        <ScrollLeft />
        <ScrollThumb />
      </ScrollArea>
    </SheetBar>
    <StatusStrip />
  </Page>
);

export default App;
